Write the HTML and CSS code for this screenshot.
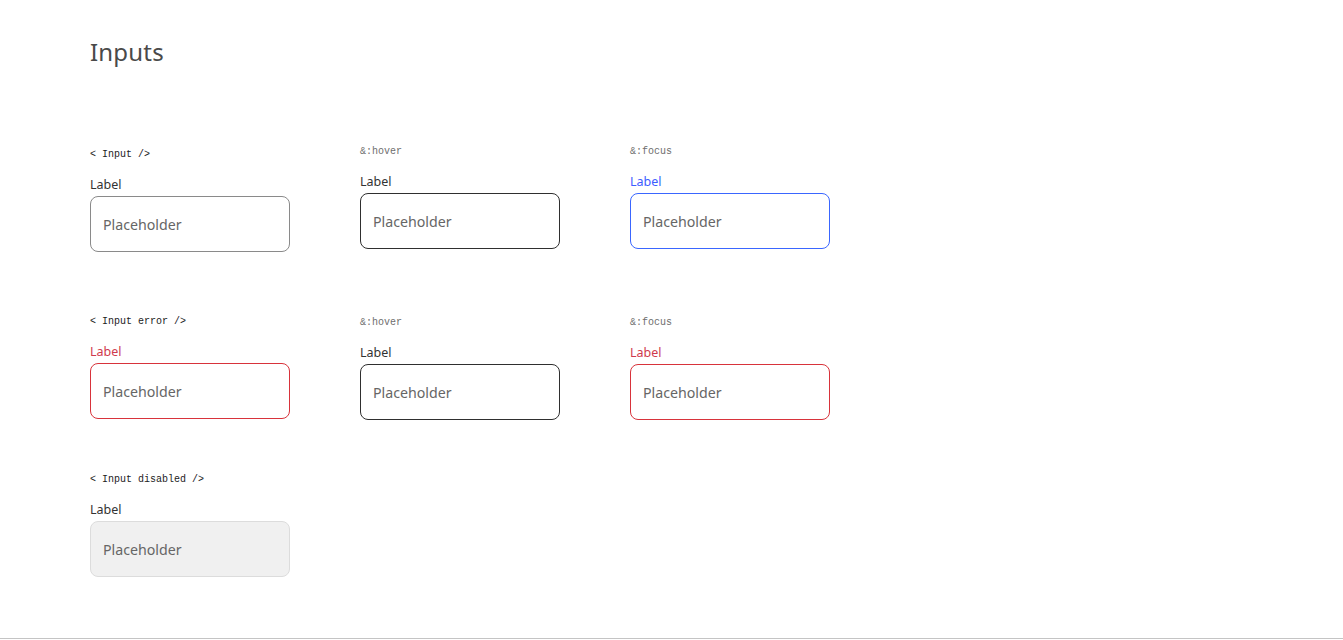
FILE: index.html
```html
<!DOCTYPE html>
<html lang="en">
<head>
<meta charset="utf-8">
<title>Inputs</title>
<link rel="stylesheet" href="styles.css">
</head>
<body>
<main class="page">
  <h1 class="title">Inputs</h1>

  <section class="row row-first">
    <div class="field field-shift3">
      <div class="tag">&lt; Input /&gt;</div>
      <label class="label">Label</label>
      <div class="box"><span class="ph">Placeholder</span></div>
    </div>
    <div class="field">
      <div class="tag tag-state">&amp;:hover</div>
      <label class="label">Label</label>
      <div class="box box-hover"><span class="ph">Placeholder</span></div>
    </div>
    <div class="field">
      <div class="tag tag-state">&amp;:focus</div>
      <label class="label label-focus">Label</label>
      <div class="box box-focus"><span class="ph">Placeholder</span></div>
    </div>
  </section>

  <section class="row row-second">
    <div class="field">
      <div class="tag">&lt; Input error /&gt;</div>
      <label class="label label-error">Label</label>
      <div class="box box-error"><span class="ph">Placeholder</span></div>
    </div>
    <div class="field field-shift1">
      <div class="tag tag-state">&amp;:hover</div>
      <label class="label">Label</label>
      <div class="box box-hover"><span class="ph">Placeholder</span></div>
    </div>
    <div class="field field-shift1">
      <div class="tag tag-state">&amp;:focus</div>
      <label class="label label-error">Label</label>
      <div class="box box-error"><span class="ph">Placeholder</span></div>
    </div>
  </section>

  <section class="row row-third">
    <div class="field">
      <div class="tag">&lt; Input disabled /&gt;</div>
      <label class="label">Label</label>
      <div class="box box-disabled"><span class="ph">Placeholder</span></div>
    </div>
  </section>
</main>
</body>
</html>
```

FILE: styles.css
```css
* { box-sizing: border-box; }

html, body {
  margin: 0;
  padding: 0;
  background: #ffffff;
}

.page {
  min-height: 639px;
  border-bottom: 1px solid #c4c4c4;
  padding: 36px 0 0 90px;
  font-family: "Noto Sans", "Open Sans", sans-serif;
}

.title {
  margin: 0;
  font-family: "Noto Sans", sans-serif;
  font-weight: 400;
  font-size: 24px;
  line-height: 32px;
  color: #4a4a4a;
  letter-spacing: 0.2px;
}

.row {
  display: flex;
  align-items: flex-start;
  gap: 70px;
}

.row-first { margin-top: 76px; }
.row-second { margin-top: 62px; }
.row-third { margin-top: 52px; }

.field {
  width: 200px;
  display: flex;
  flex-direction: column;
}

.field-shift3 { margin-top: 3px; }
.field-shift1 { margin-top: 1px; }

.tag {
  font-family: "Liberation Mono", "DejaVu Sans Mono", monospace;
  font-size: 10px;
  line-height: 12px;
  height: 14px;
  padding-top: 2px;
  color: #222222;
  margin-bottom: 16px;
  white-space: pre;
}

.tag-state {
  color: #6e6e6e;
}

.label {
  font-size: 12.5px;
  line-height: 16px;
  color: #333333;
  margin-bottom: 3px;
}

.label-focus { color: #3d5dff; }
.label-error { color: #cf3a4e; }

.box {
  height: 56px;
  border: 1px solid #8a8a8a;
  border-radius: 8px;
  display: flex;
  align-items: center;
  padding: 2px 12px 0;
  background: #ffffff;
}

.box-hover { border-color: #2f2f2f; }
.box-focus { border-color: #3a66ff; }
.box-error { border-color: #d8333b; }
.box-disabled {
  background: #f0f0f0;
  border-color: #dcdcdc;
}

.ph {
  font-size: 14.2px;
  color: #666666;
  line-height: 20px;
}
```
